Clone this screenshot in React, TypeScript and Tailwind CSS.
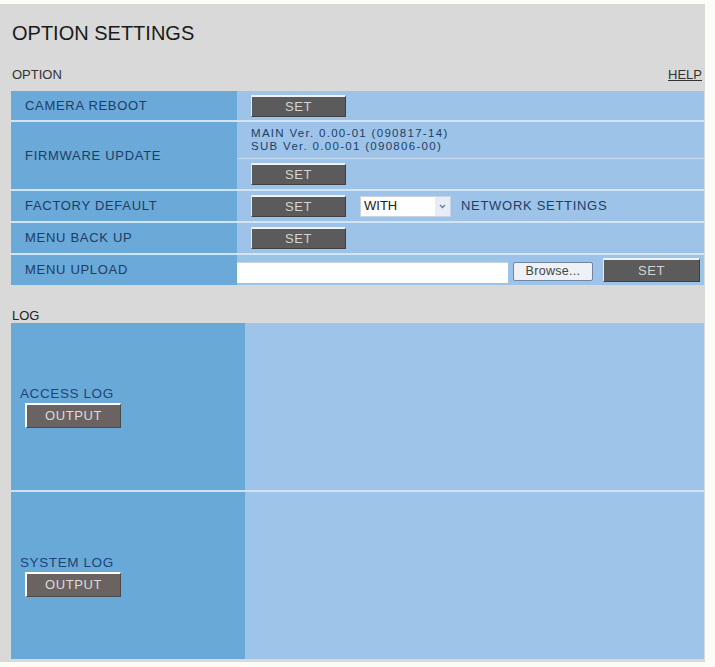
import React from "react";

const font = { fontFamily: '"Liberation Sans", Arial, sans-serif' };

function SetButton({ className = "" }: { className?: string }) {
  return (
    <button
      className={`flex items-center justify-center border-t-2 border-l border-b border-r border-t-[#eef2f5] border-l-[#e4e9ee] border-b-[#3f3f3f] border-r-[#3f3f3f] bg-[#5b5b5b] text-[13px] leading-none tracking-[0.5px] text-[#d4d4d4] ${className}`}
    >
      SET
    </button>
  );
}

function OutputButton() {
  return (
    <button className="ml-[5px] mt-[2px] flex h-[25px] w-[96px] items-center justify-center border-t-2 border-l-2 border-b border-r border-t-white border-l-white border-b-[#4a4a4a] border-r-[#4a4a4a] bg-[#6a6361] text-[13px] leading-none tracking-[0.6px] text-[#dcdcdc]">
      OUTPUT
    </button>
  );
}

function Row({
  label,
  height,
  children,
}: {
  label: string;
  height: string;
  children: React.ReactNode;
}) {
  return (
    <div className={`flex ${height}`}>
      <div className="flex w-[226px] items-center bg-[#6aa9d8] pl-[14px] text-[13px] tracking-[0.7px] text-[#1c3d66]">
        {label}
      </div>
      <div className="flex flex-1 items-center bg-[#9dc4e8]">{children}</div>
    </div>
  );
}

function LogRow({ label }: { label: string }) {
  return (
    <div className="flex h-[167px]">
      <div className="flex w-[234px] flex-col justify-center bg-[#69a9d7] pl-[9px]">
        <span className="text-[13.5px] leading-[15px] tracking-[0.6px] text-[#1c4577]">{label}</span>
        <OutputButton />
      </div>
      <div className="flex-1 bg-[#9ec5e9]" />
    </div>
  );
}

export default function App() {
  return (
    <div className="min-h-[667px] w-[715px] bg-[#fbfbf8] pt-[4px]" style={font}>
      <div className="h-[658px] w-[705px] bg-[#d9d9d9] pl-[11px] pr-[1px]">
        <h1 className="pl-[1px] pt-[19px] text-[20px] leading-[20px] text-[#1a1a1a]">
          OPTION SETTINGS
        </h1>

        <div className="mt-[25px] flex items-end justify-between pl-[1px] text-[13px] leading-[13px] text-[#333]">
          <span>OPTION</span>
          <a className="mr-[2px] underline">HELP</a>
        </div>

        <div className="mt-[10px] flex flex-col gap-[2px] bg-[#d2e5f4]">
          <Row label="CAMERA REBOOT" height="h-[29px]">
            <SetButton className="ml-[14px] h-[22px] w-[95px]" />
          </Row>

          <div className="flex h-[67px]">
            <div className="flex w-[226px] items-center bg-[#6aa9d8] pl-[14px] text-[13px] tracking-[0.7px] text-[#1c3d66]">
              FIRMWARE UPDATE
            </div>
            <div className="flex flex-1 flex-col bg-[#9dc4e8]">
              <div className="flex h-[36px] flex-col justify-center pl-[14px] text-[11.5px] leading-[13px] tracking-[1.3px] text-[#1c3d66]">
                <span>MAIN Ver. 0.00-01 (090817-14)</span>
                <span>SUB Ver. 0.00-01 (090806-00)</span>
              </div>
              <div className="h-px bg-[#c6dcf0]" />
              <div className="flex flex-1 items-center">
                <SetButton className="ml-[14px] h-[22px] w-[95px]" />
              </div>
            </div>
          </div>

          <Row label="FACTORY DEFAULT" height="h-[30px]">
            <SetButton className="ml-[14px] h-[22px] w-[95px]" />
            <div className="ml-[14px] flex h-[21px] w-[91px] items-center border border-[#c8d4e2] bg-white">
              <span className="flex-1 pl-[3px] text-[13px] text-[#222]">WITH</span>
              <span className="flex h-full w-[15px] items-center justify-center bg-[#e6edf7]">
                <svg width="7" height="5" viewBox="0 0 7 5">
                  <path d="M1 1 L3.5 3.5 L6 1" stroke="#6a7f9c" strokeWidth="1.4" fill="none" />
                </svg>
              </span>
            </div>
            <span className="ml-[10px] text-[13px] tracking-[0.7px] text-[#1c3d66]">NETWORK SETTINGS</span>
          </Row>

          <Row label="MENU BACK UP" height="h-[30px]">
            <SetButton className="ml-[14px] h-[22px] w-[95px]" />
          </Row>

          <Row label="MENU UPLOAD" height="h-[30px]">
            <div className="mt-[4px] h-[21px] w-[271px] shrink-0 border-t border-t-[#c7d3df] bg-white" />
            <button className="ml-[5px] mt-[3px] flex h-[19px] w-[80px] shrink-0 items-center justify-center rounded-[2px] border border-[#6f86a6] bg-[#eef1f6] text-[12.5px] leading-none tracking-[0.3px] text-[#444]">
              Browse...
            </button>
            <SetButton className="ml-[10px] h-[24px] w-[97px] shrink-0" />
          </Row>
        </div>

        <div className="mt-[24px] pl-[1px] text-[13px] leading-[13px] text-[#222]">LOG</div>

        <div className="mt-[1px] flex flex-col gap-[2px] bg-[#cfe3f5]">
          <LogRow label="ACCESS LOG" />
          <LogRow label="SYSTEM LOG" />
        </div>
      </div>
    </div>
  );
}
